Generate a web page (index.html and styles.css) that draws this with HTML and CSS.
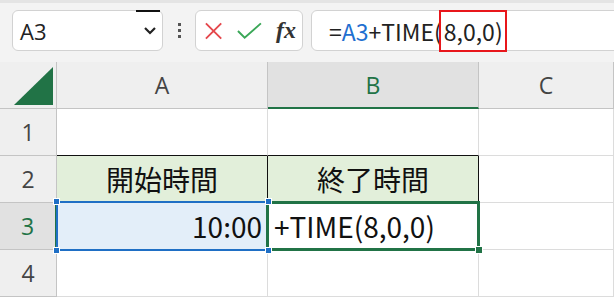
FILE: index.html
```html
<!DOCTYPE html>
<html lang="ja">

<head>
  <meta charset="utf-8" />
  <title>TIME</title>
  <link rel="stylesheet" href="styles.css">
</head>

<body>
  <div class="toolbar">
    <div class="namebox">
      <span class="name">A3</span>
      <svg class="chevron" width="14" height="9" viewBox="0 0 14 9">
        <path d="M2 2 L7 7 L12 2" fill="none" stroke="#222" stroke-width="2.2" />
      </svg>
    </div>
    <div class="grip"><i></i><i></i><i></i></div>
    <div class="fxbox">
      <svg width="20" height="18" viewBox="0 0 20 18">
        <path d="M2 1 L18 17 M18 1 L2 17" stroke="#e5484d" stroke-width="2" fill="none" />
      </svg>
      <svg width="26" height="18" viewBox="0 0 26 18">
        <path d="M1 9 L8 16 L25 1" stroke="#3aa757" stroke-width="2" fill="none" />
      </svg>
      <span class="fx">fx</span>
    </div>
    <div class="formula">
      <span>=</span><span class="ref">A3</span><span>+TIME(</span><span class="mark">8,0,0)</span>
    </div>
  </div>

  <div class="sheet">
    <div class="corner">
      <svg width="39" height="38" viewBox="0 0 39 38">
        <polygon points="0,38 39,38 39,0" fill="#217346" />
      </svg>
    </div>
    <div class="colhead">A</div>
    <div class="colhead active">B</div>
    <div class="colhead">C</div>

    <div class="rowhead">1</div>
    <div class="cell above"></div>
    <div class="cell above"></div>
    <div class="cell"></div>

    <div class="rowhead">2</div>
    <div class="cell label">開始時間</div>
    <div class="cell label">終了時間</div>
    <div class="cell"></div>

    <div class="rowhead active">3</div>
    <div class="cell data picked">10:00
      <i class="knob tl"></i><i class="knob tr"></i><i class="knob bl"></i><i class="knob br"></i>
    </div>
    <div class="cell data current">+TIME(8,0,0)
      <i class="fill"></i>
    </div>
    <div class="cell"></div>

    <div class="rowhead">4</div>
    <div class="cell"></div>
    <div class="cell"></div>
    <div class="cell"></div>
  </div>
</body>

</html>
```

FILE: styles.css
```css
body {
  margin: 0;
  width: 614px;
  height: 297px;
  overflow: hidden;
  background-color: #fff;
  font-family: "Noto Sans CJK JP", "Noto Sans", sans-serif;
}

.toolbar {
  height: 62px;
  box-sizing: border-box;
  padding: 7px 0 0 12px;
  display: flex;
  align-items: flex-start;
  background-color: #f3f3f3;
  border-top: 3px solid #e4e4e4;
}

.namebox {
  position: relative;
  width: 151px;
  height: 41px;
  box-sizing: border-box;
  display: flex;
  align-items: center;
  justify-content: space-between;
  padding: 0 5px 0 7px;
  background-color: #fff;
  border: 1px solid #d2d2d2;
  border-radius: 6px;
}

.namebox::before {
  content: "";
  position: absolute;
  top: -1px;
  right: 2px;
  width: 24px;
  height: 2px;
  background-color: #111;
}

.name {
  font-family: "Open Sans", sans-serif;
  font-size: 22px;
  color: #222;
}

.grip {
  width: 32px;
  height: 41px;
  display: flex;
  flex-direction: column;
  align-items: center;
  justify-content: center;
  gap: 3px;
}

.grip i {
  width: 3px;
  height: 3px;
  background-color: #555;
}

.fxbox {
  width: 108px;
  height: 41px;
  box-sizing: border-box;
  display: flex;
  align-items: center;
  padding: 0 6px 0 8px;
  gap: 14px;
  background-color: #fff;
  border: 1px solid #d2d2d2;
  border-radius: 6px;
}

.fx {
  font-family: "Liberation Serif", serif;
  font-style: italic;
  font-weight: bold;
  font-size: 24px;
  color: #333;
}

.formula {
  flex: 1;
  margin-left: 8px;
  margin-right: -12px;
  height: 41px;
  box-sizing: border-box;
  display: flex;
  align-items: center;
  padding-left: 17px;
  font-size: 23px;
  color: #222;
  background-color: #fff;
  border: 1px solid #d2d2d2;
  border-radius: 6px;
}

.formula .ref {
  color: #1f6fd0;
}

.formula .mark {
  height: 42px;
  box-sizing: border-box;
  display: flex;
  align-items: center;
  padding: 0 2px 0 3px;
  margin-left: -3px;
  border: 2px solid #e8161b;
}

.sheet {
  display: grid;
  grid-template-columns: 57px 211px 211px 1fr;
  grid-auto-rows: 47px;
}

.sheet > div {
  box-sizing: border-box;
  border-right: 1px solid #dcdcdc;
  border-bottom: 1px solid #dcdcdc;
}

.corner {
  display: flex;
  align-items: flex-end;
  justify-content: flex-end;
  padding: 0 3px 3px 0;
}

.sheet > .corner,
.sheet > .colhead,
.sheet > .rowhead {
  background-color: #efefef;
  border-color: #c4c4c4;
}

.colhead,
.rowhead {
  display: flex;
  align-items: center;
  justify-content: center;
  font-family: "Open Sans", sans-serif;
  font-size: 23px;
  color: #444;
}

.sheet > .colhead.active {
  background-color: #e1e1e1;
  color: #217346;
  border-bottom: 2px solid #217346;
}

.sheet > .rowhead.active {
  background-color: #e1e1e1;
  color: #217346;
  border-right: 2px solid #217346;
}

.cell {
  display: flex;
  align-items: center;
  font-size: 28px;
  color: #111;
  padding: 0 4px;
}

.sheet > .above {
  border-bottom-color: #111;
}

.sheet > .label,
.sheet > .data {
  border-right-color: #111;
  border-bottom-color: #111;
}

.label {
  justify-content: center;
  background-color: #e2efda;
}

.data {
  position: relative;
}

.picked {
  justify-content: flex-end;
  background-color: #e3eef9;
  padding-right: 5px;
}

.picked::after {
  content: "";
  position: absolute;
  left: -1px;
  top: -2px;
  right: -2px;
  bottom: -2px;
  border: 2px solid #1f6fc5;
}

.current {
  padding-left: 6px;
}

.current::after {
  content: "";
  position: absolute;
  left: -2px;
  top: -2px;
  right: -2px;
  bottom: -2px;
  border: 3px solid #217346;
}

.knob {
  position: absolute;
  z-index: 2;
  width: 5px;
  height: 5px;
  background-color: #1f6fc5;
  border: 1px solid #fff;
}

.knob.tl { left: -4px; top: -5px; }
.knob.tr { right: -5px; top: -5px; }
.knob.bl { left: -4px; bottom: -5px; }
.knob.br { right: -5px; bottom: -5px; }

.fill {
  position: absolute;
  z-index: 2;
  right: -5px;
  bottom: -5px;
  width: 6px;
  height: 6px;
  background-color: #217346;
  border: 1px solid #fff;
}
```
